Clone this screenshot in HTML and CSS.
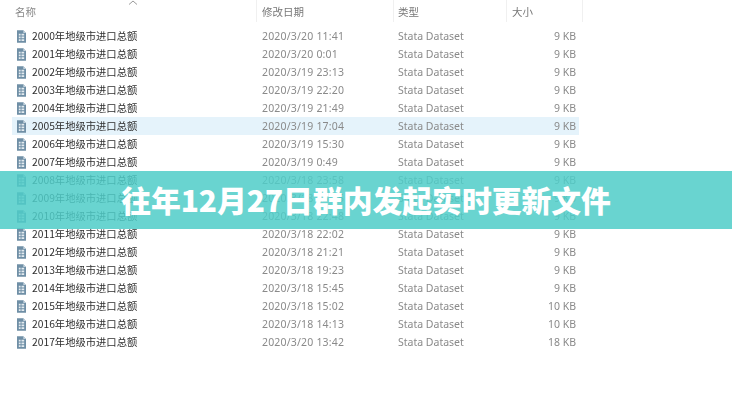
FILE: index.html
```html
<!DOCTYPE html>
<html lang="zh">
<head>
<meta charset="utf-8">
<title>往年12月27日群内发起实时更新文件</title>
<link rel="stylesheet" href="styles.css">
</head>
<body>
<svg class="defs" width="0" height="0" aria-hidden="true"><symbol id="doc" viewBox="0 0 10 14"><path d="M0 0h7l3 3v11H0z" fill="#6f8fa6"/><path d="M7 0l3 3H7z" fill="#c4d2dc"/><path d="M2 4h2v2H2zM5 4h3v2H5zM2 7h2v2H2zM5 7h3v2H5zM2 10h2v2H2zM5 10h3v2H5z" fill="#e4ebf0"/></symbol></svg>
<main class="explorer">
  <div class="head">
    <span class="h-name">名称</span><span>修改日期</span><span class="h-type">类型</span><span>大小</span>
    <svg class="sort" width="10" height="5" viewBox="0 0 10 5"><path d="M1 4.500L5 1l4 3.500" fill="none" stroke="#9a9a9a"/></svg>
  </div>
  <div class="list">
    <div class="row"><span class="name"><svg class="ico"><use href="#doc"/></svg>2000年地级市进口总额</span><span class="date">2020/3/20 11:41</span><span>Stata Dataset</span><span class="size">9 KB</span></div>
    <div class="row"><span class="name"><svg class="ico"><use href="#doc"/></svg>2001年地级市进口总额</span><span class="date">2020/3/20 0:01</span><span>Stata Dataset</span><span class="size">9 KB</span></div>
    <div class="row"><span class="name"><svg class="ico"><use href="#doc"/></svg>2002年地级市进口总额</span><span class="date">2020/3/19 23:13</span><span>Stata Dataset</span><span class="size">9 KB</span></div>
    <div class="row"><span class="name"><svg class="ico"><use href="#doc"/></svg>2003年地级市进口总额</span><span class="date">2020/3/19 22:20</span><span>Stata Dataset</span><span class="size">9 KB</span></div>
    <div class="row"><span class="name"><svg class="ico"><use href="#doc"/></svg>2004年地级市进口总额</span><span class="date">2020/3/19 21:49</span><span>Stata Dataset</span><span class="size">9 KB</span></div>
    <div class="row selected"><span class="name"><svg class="ico"><use href="#doc"/></svg>2005年地级市进口总额</span><span class="date">2020/3/19 17:04</span><span>Stata Dataset</span><span class="size">9 KB</span></div>
    <div class="row"><span class="name"><svg class="ico"><use href="#doc"/></svg>2006年地级市进口总额</span><span class="date">2020/3/19 15:30</span><span>Stata Dataset</span><span class="size">9 KB</span></div>
    <div class="row"><span class="name"><svg class="ico"><use href="#doc"/></svg>2007年地级市进口总额</span><span class="date">2020/3/19 0:49</span><span>Stata Dataset</span><span class="size">9 KB</span></div>
    <div class="row"><span class="name"><svg class="ico"><use href="#doc"/></svg>2008年地级市进口总额</span><span class="date">2020/3/18 23:58</span><span>Stata Dataset</span><span class="size">9 KB</span></div>
    <div class="row"><span class="name"><svg class="ico"><use href="#doc"/></svg>2009年地级市进口总额</span><span class="date">2020/3/18 23:15</span><span>Stata Dataset</span><span class="size">9 KB</span></div>
    <div class="row"><span class="name"><svg class="ico"><use href="#doc"/></svg>2010年地级市进口总额</span><span class="date">2020/3/18 22:48</span><span>Stata Dataset</span><span class="size">9 KB</span></div>
    <div class="row"><span class="name"><svg class="ico"><use href="#doc"/></svg>2011年地级市进口总额</span><span class="date">2020/3/18 22:02</span><span>Stata Dataset</span><span class="size">9 KB</span></div>
    <div class="row"><span class="name"><svg class="ico"><use href="#doc"/></svg>2012年地级市进口总额</span><span class="date">2020/3/18 21:21</span><span>Stata Dataset</span><span class="size">9 KB</span></div>
    <div class="row"><span class="name"><svg class="ico"><use href="#doc"/></svg>2013年地级市进口总额</span><span class="date">2020/3/18 19:23</span><span>Stata Dataset</span><span class="size">9 KB</span></div>
    <div class="row"><span class="name"><svg class="ico"><use href="#doc"/></svg>2014年地级市进口总额</span><span class="date">2020/3/18 15:45</span><span>Stata Dataset</span><span class="size">9 KB</span></div>
    <div class="row"><span class="name"><svg class="ico"><use href="#doc"/></svg>2015年地级市进口总额</span><span class="date">2020/3/18 15:02</span><span>Stata Dataset</span><span class="size">10 KB</span></div>
    <div class="row"><span class="name"><svg class="ico"><use href="#doc"/></svg>2016年地级市进口总额</span><span class="date">2020/3/18 14:13</span><span>Stata Dataset</span><span class="size">10 KB</span></div>
    <div class="row"><span class="name"><svg class="ico"><use href="#doc"/></svg>2017年地级市进口总额</span><span class="date">2020/3/20 13:42</span><span>Stata Dataset</span><span class="size">18 KB</span></div>
  </div>
</main>
<div class="banner"><h1>往年12月27日群内发起实时更新文件</h1></div>
</body>
</html>
```
FILE: styles.css
```css
* { box-sizing: border-box; }
html, body { margin: 0; height: 400px; overflow: hidden; background: #fff; }
body { position: relative; font-family: "Noto Sans CJK SC", "Noto Sans", sans-serif; }
.defs { display: block; }
.explorer { padding: 0 150px 0 12px; width: 732px; filter: blur(.35px); }
.head { display: grid; grid-template-columns: 245px 137px 113px 76px; width: 571px; position: relative; height: 27px; align-items: start; font-size: 10.500px; color: #777; }
.head > span { padding-left: 5px; height: 22px; line-height: 24px; border-right: 1px solid #f0f0f0; }
.head > .h-name { padding-left: 3px; color: #888; }
.head > .h-type { padding-left: 4px; }
.sort { position: absolute; left: 116px; top: 0; }
.row { display: grid; grid-template-columns: 244px 136px 114px 73px; width: 567px; height: 18px; align-items: center; font-size: 10.500px; line-height: 18px; color: #8a8a8a; font-family: "Noto Sans", "Noto Sans CJK SC", sans-serif; }
.row > span { padding-left: 6px; white-space: nowrap; }
.row > .name { display: flex; align-items: center; padding-left: 5px; color: #2f2f2f; font-family: "Noto Sans CJK SC", sans-serif; font-size: 10.300px; }
.row > .date { letter-spacing: .18px; }
.row > .size { padding: 0 3px 0 0; text-align: right; }
.selected { background: #e5f3fb; }
.ico { width: 9px; height: 13px; margin-right: 6px; flex: none; }
.banner { position: absolute; left: 0; right: 0; top: 171px; height: 58px; background: rgba(79, 205, 200, .85); display: flex; align-items: center; justify-content: center; }
.banner h1 { margin: 0 0 1px; font-size: 29.800px; font-weight: 900; color: #fff; line-height: 1; white-space: nowrap; font-family: "Noto Sans CJK SC", sans-serif; }
```
